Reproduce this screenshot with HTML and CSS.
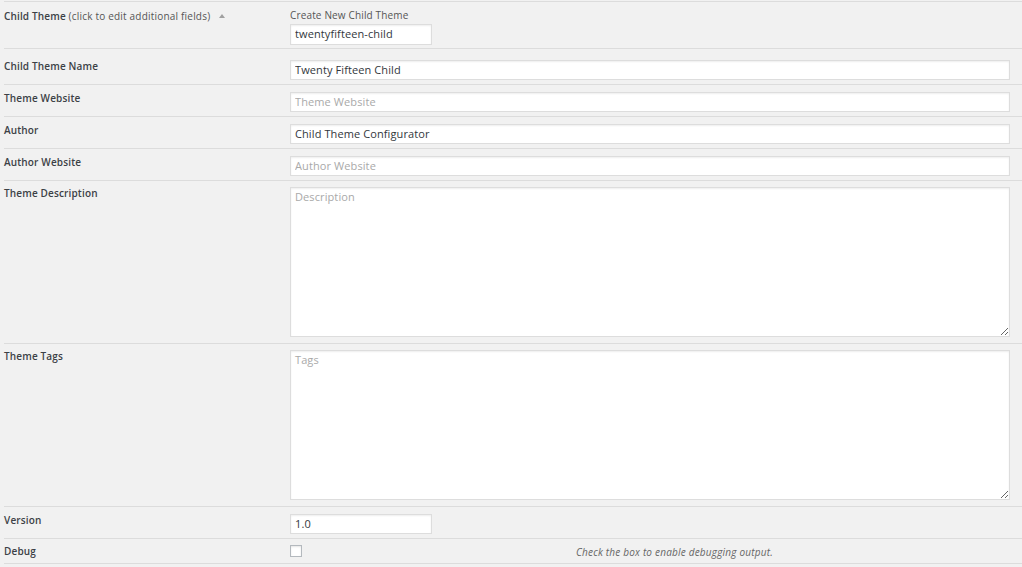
FILE: index.html
```html
<!DOCTYPE html>
<html>
<head>
    <title>Child Theme</title>
    <meta charset="utf-8">
    <link rel="stylesheet" href="styles.css">
</head>
<body>
    <div id="child-theme-form">
        <div class="row row-first">
            <div class="label">
                Child Theme <span class="hint">(click to edit additional fields)</span>
                <span class="toggle"></span>
            </div>
            <div class="cell">
                <div class="small-label">Create New Child Theme</div>
                <input type="text" class="short" value="twentyfifteen-child">
            </div>
        </div>

        <div class="row row-name">
            <div class="label">Child Theme Name</div>
            <div class="cell"><input type="text" value="Twenty Fifteen Child"></div>
        </div>

        <div class="row">
            <div class="label">Theme Website</div>
            <div class="cell"><input type="text" placeholder="Theme Website"></div>
        </div>

        <div class="row">
            <div class="label">Author</div>
            <div class="cell"><input type="text" value="Child Theme Configurator"></div>
        </div>

        <div class="row">
            <div class="label">Author Website</div>
            <div class="cell"><input type="text" placeholder="Author Website"></div>
        </div>

        <div class="row row-area">
            <div class="label">Theme Description</div>
            <div class="cell"><textarea placeholder="Description"></textarea></div>
        </div>

        <div class="row row-area">
            <div class="label">Theme Tags</div>
            <div class="cell"><textarea placeholder="Tags"></textarea></div>
        </div>

        <div class="row">
            <div class="label">Version</div>
            <div class="cell"><input type="text" class="short" value="1.0"></div>
        </div>

        <div class="row row-debug">
            <div class="label">Debug</div>
            <div class="check-cell"><input type="checkbox"></div>
            <div class="howto">Check the box to enable debugging output.</div>
        </div>
    </div>
</body>
</html>
```

FILE: styles.css
```css
body {
    margin: 0;
    background-color: #f1f1f1;
    font-family: "Open Sans", sans-serif;
    color: #32373c;
}

#child-theme-form {
    margin: 1px 0 0 4px;
}

.row {
    display: flex;
    border-top: 1px solid #dcdcdc;
    padding: 7px 0 4px;
}

.row:last-child {
    border-bottom: 1px solid #dcdcdc;
}

.row-first {
    padding: 7px 0 3px;
}

.row-name {
    padding-top: 11px;
}

.row-area {
    padding: 6px 0 6px;
}

.row-debug {
    padding: 6px 0 5px;
}

.label {
    width: 286px;
    flex-shrink: 0;
    padding-top: 1px;
    font-size: 10px;
    font-weight: 600;
    line-height: 10px;
    letter-spacing: 0.15px;
    color: #3c4146;
}

.row-first .label {
    line-height: 13px;
}

.hint {
    font-weight: 400;
    color: #555;
    letter-spacing: 0.2px;
}

/* little arrow next to the hint */
.toggle {
    display: inline-block;
    width: 0;
    height: 0;
    margin-left: 6px;
    vertical-align: 2px;
    border-left: 3px solid transparent;
    border-right: 3px solid transparent;
    border-bottom: 4px solid #a0a0a0;
}

.cell {
    flex: 1;
    padding-right: 12px;
}

.small-label {
    font-size: 10px;
    line-height: 13px;
    color: #555;
    letter-spacing: 0.15px;
    margin-bottom: 2px;
}

input[type="text"],
textarea {
    display: block;
    box-sizing: border-box;
    width: 100%;
    height: 20px;
    margin: 0;
    padding: 0 4px 2px;
    border: 1px solid #ddd;
    box-shadow: inset 0 1px 2px rgba(0, 0, 0, 0.07);
    background-color: #fff;
    font-family: "Open Sans", sans-serif;
    font-size: 11px;
    letter-spacing: 0.1px;
    color: #32373c;
    outline: none;
}

input.short {
    width: 142px;
}

.row-first input.short {
    height: 21px;
}

textarea {
    height: 150px;
    padding: 2px 4px;
    line-height: 14px;
    resize: both;
}

::placeholder {
    color: #a9a9a9;
}

.check-cell {
    width: 286px;
    flex-shrink: 0;
}

input[type="checkbox"] {
    appearance: none;
    -webkit-appearance: none;
    display: block;
    width: 12px;
    height: 12px;
    margin: 0;
    border: 1px solid #b4b9be;
    background-color: #fff;
    box-shadow: inset 0 1px 2px rgba(0, 0, 0, 0.1);
}

.howto {
    font-size: 10px;
    font-style: italic;
    color: #666;
    line-height: 12px;
    letter-spacing: 0.2px;
    padding-top: 1px;
}
```
